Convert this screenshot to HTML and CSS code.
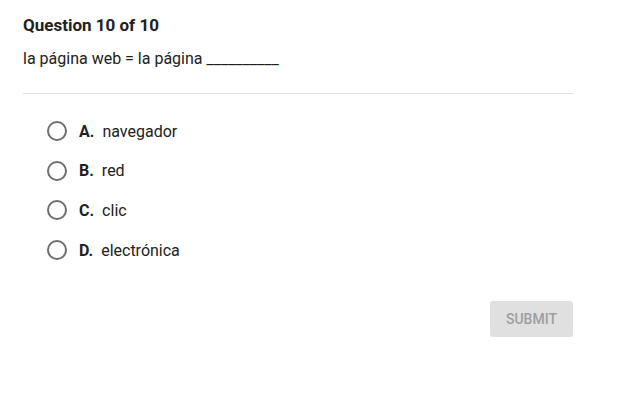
FILE: index.html
```html
<!DOCTYPE html>
<html>
<head>
<meta charset="utf-8">
<link rel="stylesheet" href="styles.css">
</head>
<body>
<div class="quiz">
  <h1 class="title">Question 10 of 10</h1>
  <p class="prompt">la página web = la página __________</p>
  <hr class="divider">
  <ul class="options">
    <li class="option"><span class="radio"></span><span class="letter">A.</span><span class="answer">navegador</span></li>
    <li class="option"><span class="radio"></span><span class="letter">B.</span><span class="answer">red</span></li>
    <li class="option"><span class="radio"></span><span class="letter">C.</span><span class="answer">clic</span></li>
    <li class="option"><span class="radio"></span><span class="letter">D.</span><span class="answer">electrónica</span></li>
  </ul>
  <div class="actions">
    <button class="submit">SUBMIT</button>
  </div>
</div>
</body>
</html>
```
FILE: styles.css
```css
html, body {
  margin: 0;
  padding: 0;
  background: #ffffff;
}
body {
  font-family: Roboto, "Liberation Sans", sans-serif;
  color: #212121;
}
.quiz {
  width: 550px;
  padding: 15px 0 0 23px;
}
.title {
  margin: 0;
  font-size: 17px;
  line-height: 20px;
  font-weight: 700;
  color: #212121;
}
.prompt {
  margin: 14px 0 0;
  font-size: 16px;
  line-height: 20px;
  color: #212121;
}
.divider {
  margin: 24px 0 0;
  border: 0;
  border-top: 1px solid #e0e0e0;
  height: 0;
}
.options {
  list-style: none;
  margin: 0;
  padding: 27px 0 0 24px;
  display: flex;
  flex-direction: column;
  gap: 19.7px;
}
.option {
  display: flex;
  align-items: center;
  height: 20px;
  font-size: 16px;
}
.radio {
  width: 16px;
  height: 16px;
  border: 2px solid #6e6e6e;
  border-radius: 50%;
  margin-right: 12px;
  flex: none;
}
.letter {
  font-weight: 700;
  margin-right: 8px;
}
.actions {
  display: flex;
  justify-content: flex-end;
  margin-top: 41px;
}
.submit {
  width: 83px;
  height: 36px;
  border: 0;
  border-radius: 3px;
  background: #e0e0e0;
  color: #9e9e9e;
  font-family: Roboto, "Liberation Sans", sans-serif;
  font-size: 14px;
  font-weight: 500;
  padding: 0;
}
```
